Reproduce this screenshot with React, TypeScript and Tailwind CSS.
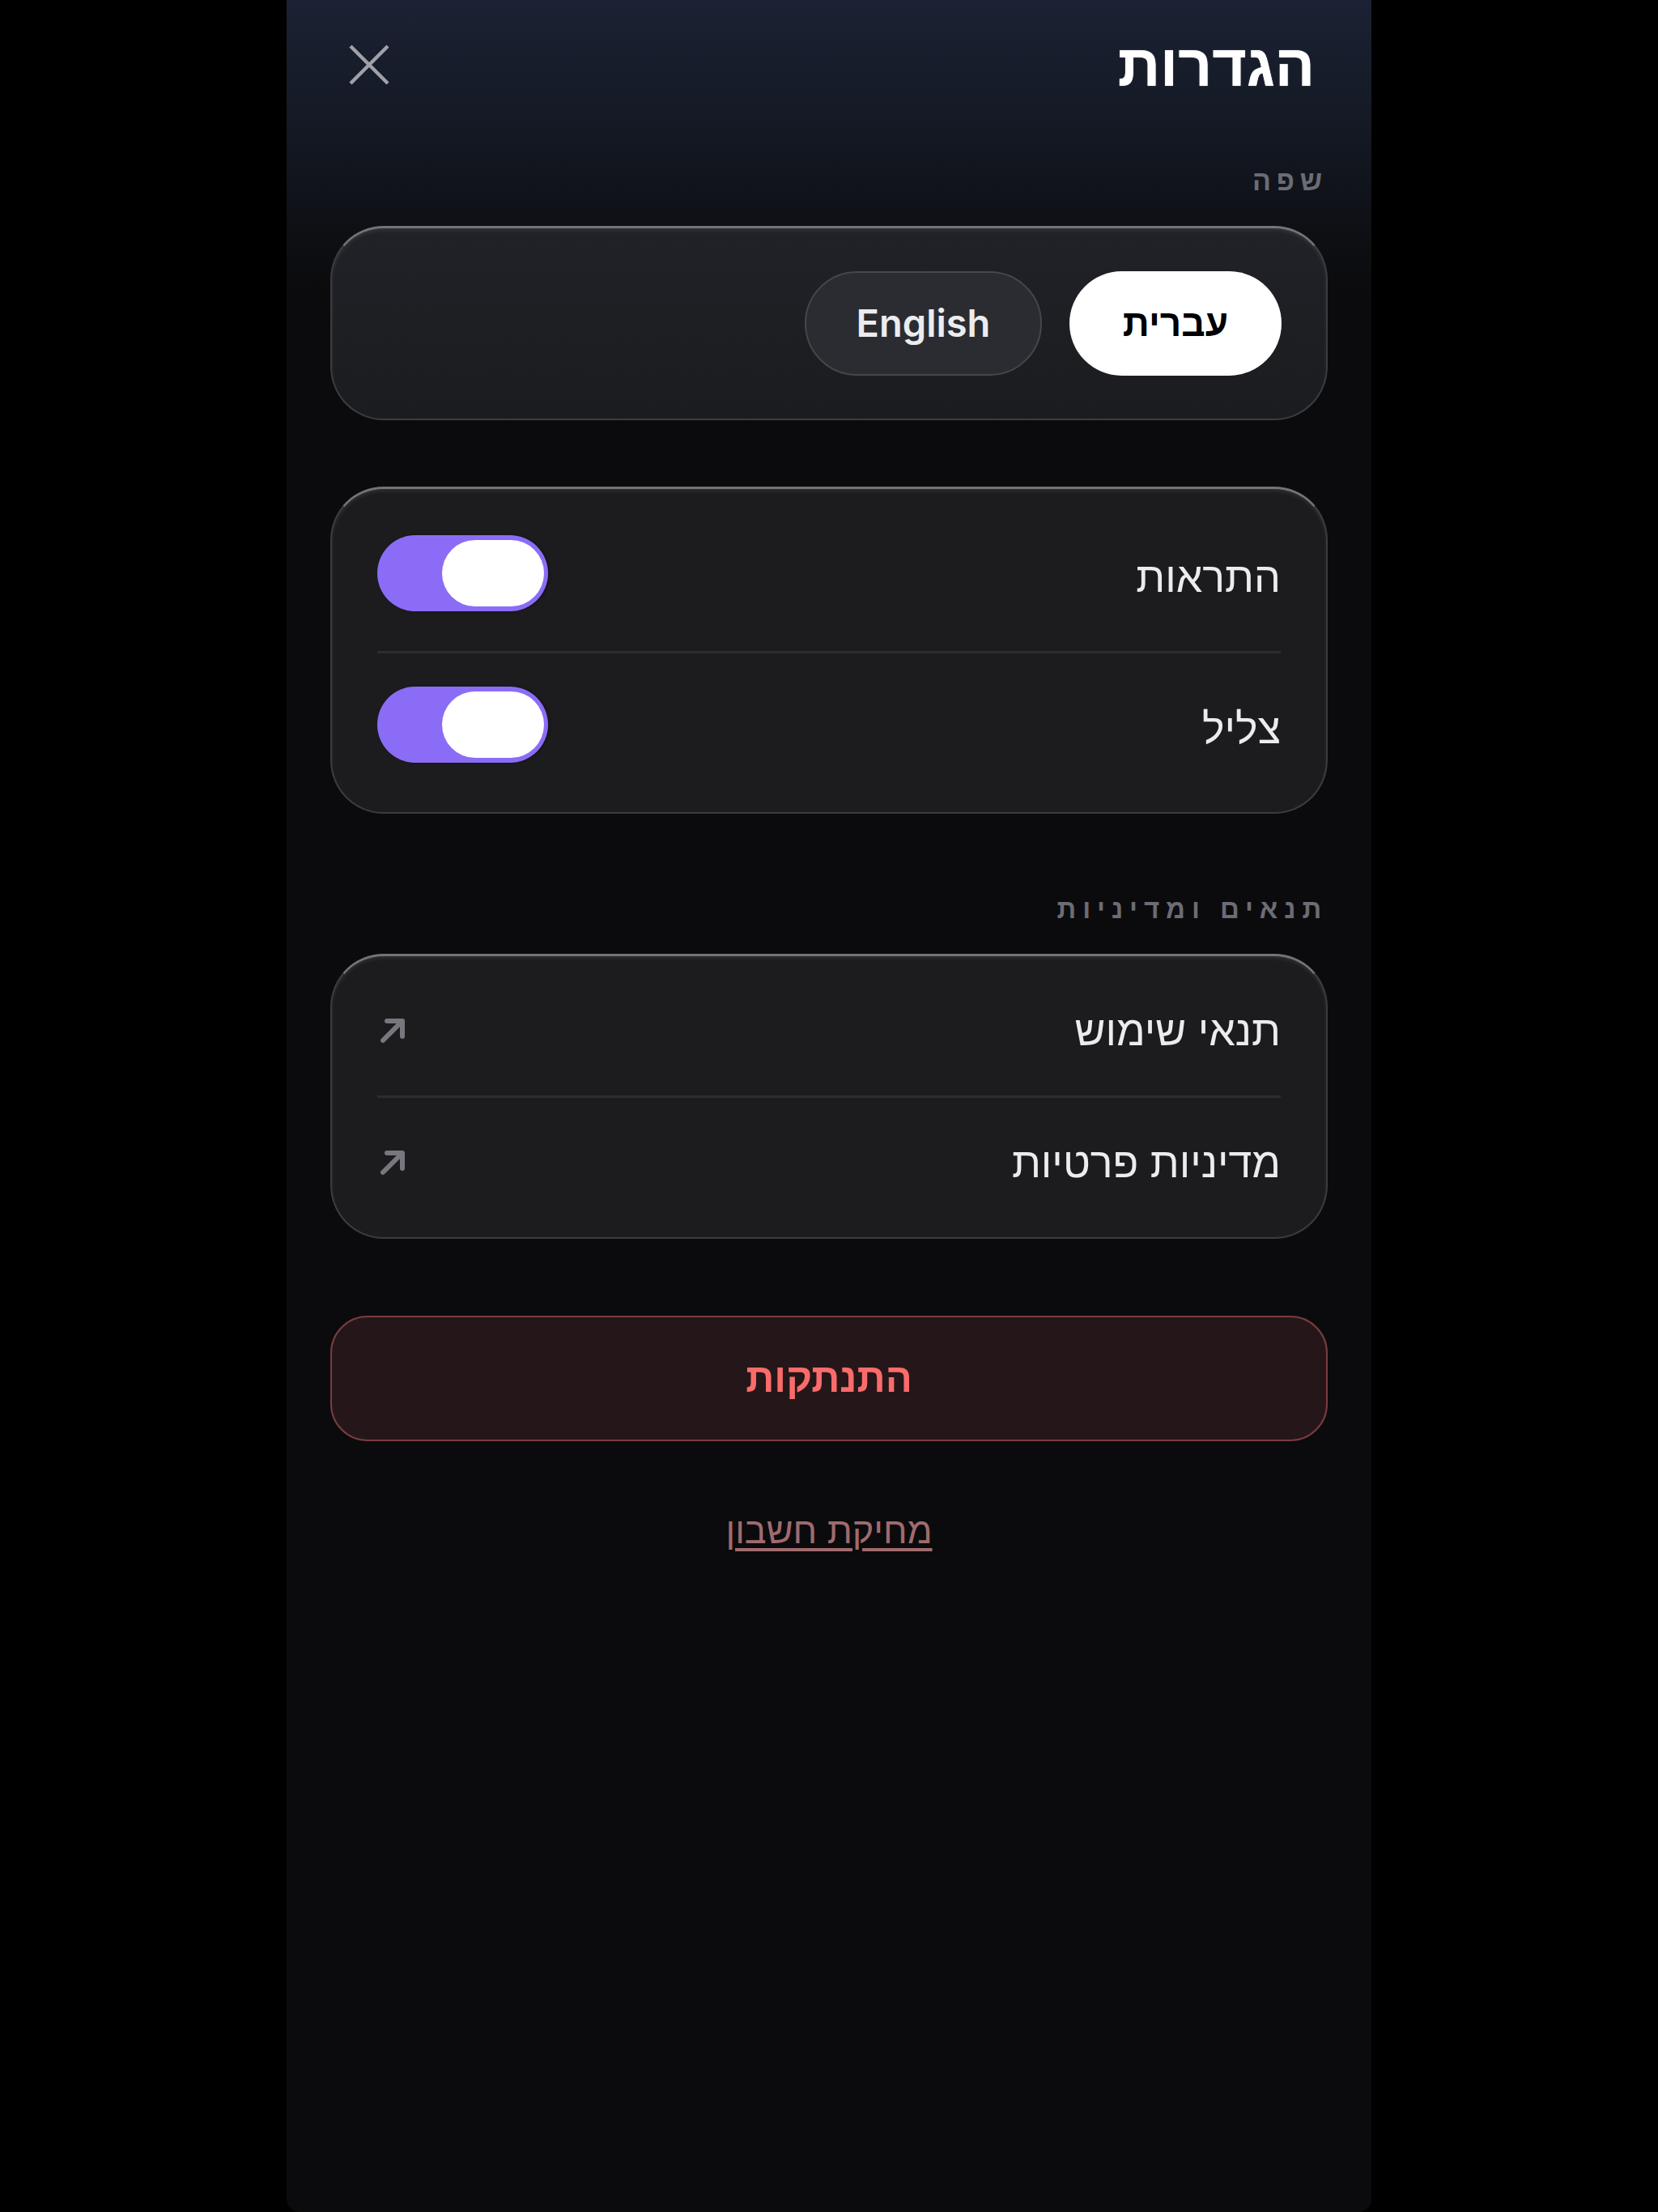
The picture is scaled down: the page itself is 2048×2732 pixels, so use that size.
import React from "react";

const heb = { fontFamily: '"Liberation Sans", "DejaVu Sans", sans-serif' };

function Toggle() {
  return (
    <div dir="ltr" className="w-[211px] h-[94px] rounded-full bg-[#8b6cf6] flex items-center justify-end pr-[5px] shadow-[2px_0_3px_rgba(0,0,0,0.35)]">
      <div className="w-[126px] h-[82px] rounded-full bg-white" />
    </div>
  );
}

function Arrow() {
  return (
    <svg width="34" height="34" viewBox="0 0 34 34" fill="none" stroke="#77777d" strokeWidth="6" strokeLinecap="round" strokeLinejoin="round">
      <path d="M5 29 L28 6" />
      <path d="M10 5 H29 V24" />
    </svg>
  );
}

const cardCls =
  "rounded-[66px] border-2 border-t-[3px] border-[#3b3c41] border-t-[#737478] bg-[#1c1c1f] shadow-[inset_0_3px_4px_rgba(255,255,255,0.08)]";

export default function App() {
  return (
    <div className="w-full h-[2732px] bg-black flex justify-center" style={heb}>
      <div
        dir="rtl"
        className="w-[1340px] h-[2732px] rounded-b-[16px] bg-[linear-gradient(to_bottom,#1c2134_0px,#151a26_140px,#0e1015_280px,#0b0b0d_360px,#0b0b0d_100%)] flex flex-col"
      >
        {/* Header */}
        <div className="h-[160px] pr-[70px] pl-[76px] flex items-center justify-between">
          <h1 className="text-[73px] leading-none font-bold text-white [text-shadow:0_0_1px_#fff]">הגדרות</h1>
          <button className="w-[52px] h-[52px] flex items-center justify-center">
            <svg width="52" height="52" viewBox="0 0 52 52" fill="none" stroke="#a1a1a9" strokeWidth="4.5">
              <path d="M3 3 L49 49" />
              <path d="M49 3 L3 49" />
            </svg>
          </button>
        </div>

        <div className="px-[54px] flex flex-col">
          {/* Language label */}
          <div className="mt-[43px] h-[40px] leading-[40px] text-[34px] font-bold tracking-[0.2em] text-[#6c6c74]">
            שפה
          </div>

          {/* Language card */}
          <div className="mt-[36px] h-[240px] flex items-center gap-[34px] pr-[55px] rounded-[66px] border-2 border-t-[3px] border-[#3b3c41] border-t-[#737478] bg-[linear-gradient(to_bottom,#202228,#1b1c1f)] shadow-[inset_0_3px_4px_rgba(255,255,255,0.08)]">
            <button className="w-[262px] h-[129px] rounded-full bg-white text-black text-[46px] font-bold">
              עברית
            </button>
            <button
              className="w-[293px] h-[129px] rounded-full bg-[#2a2c31] border-2 border-[#46474c] text-[#ececf0] text-[47px] font-semibold"
              style={{ fontFamily: 'Inter, "Liberation Sans", sans-serif' }}
            >
              English
            </button>
          </div>

          {/* Toggles card */}
          <div className={"mt-[82px] px-[56px] pt-[8px] pb-[6px] flex flex-col " + cardCls}>
            <div className="h-[192px] flex items-center justify-between">
              <span className="text-[52px] leading-none text-[#ececf0] mt-[10px]">התראות</span>
              <Toggle />
            </div>
            <div className="h-[3px] bg-[#2c2d31]" />
            <div className="h-[190px] pb-[14px] flex items-center justify-between">
              <span className="text-[52px] leading-none text-[#ececf0] mt-[10px]">צליל</span>
              <Toggle />
            </div>
          </div>

          {/* Terms label */}
          <div className="mt-[98px] h-[40px] leading-[40px] text-[33px] font-bold tracking-[0.24em] text-[#6c6c74]">
            תנאים ומדיניות
          </div>

          {/* Links card */}
          <div className={"mt-[35px] px-[56px] py-[12px] flex flex-col " + cardCls}>
            <div className="h-[160px] flex items-center justify-between">
              <span className="text-[52px] leading-none text-[#ececf0]">תנאי שימוש</span>
              <span className="ml-[2px]"><Arrow /></span>
            </div>
            <div className="h-[3px] bg-[#2c2d31]" />
            <div className="h-[160px] flex items-center justify-between">
              <span className="text-[52px] leading-none text-[#ececf0]">מדיניות פרטיות</span>
              <span className="ml-[2px]"><Arrow /></span>
            </div>
          </div>

          {/* Logout */}
          <button className="mt-[95px] h-[155px] rounded-[46px] border-2 border-[#7a3c40] bg-[#251719] text-[#fb6b6b] text-[49px] font-bold">
            התנתקות
          </button>

          {/* Delete account */}
          <div className="mt-[87px] flex justify-center">
            <span className="text-[45px] leading-[48px] text-[#a06b6e] underline underline-offset-[6px] decoration-[4px]">
              מחיקת חשבון
            </span>
          </div>
        </div>
      </div>
    </div>
  );
}
